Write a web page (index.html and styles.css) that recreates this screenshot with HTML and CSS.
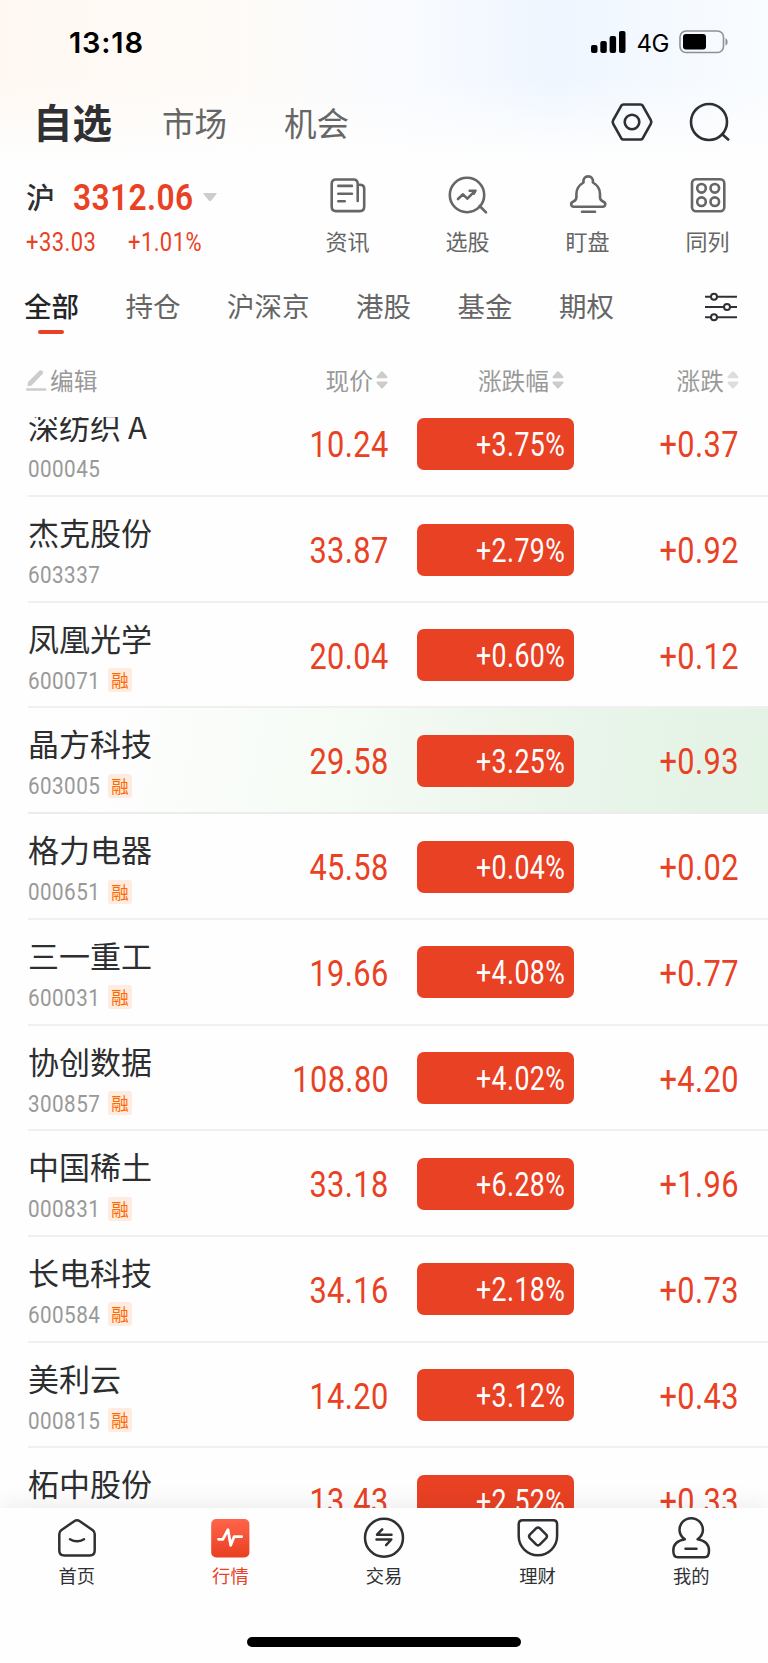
FILE: index.html
```html
<!DOCTYPE html>
<html lang="zh-CN">
<head>
    <meta charset="UTF-8">
    <meta name="viewport" content="width=device-width, initial-scale=1.0">
    <title>自选</title>
    <link rel="stylesheet" href="styles.css">
</head>
<body>
    <div class="app">
        <header class="top">
            <div class="status">
                <span class="time">13:18</span>
                <div class="status-right">
                    <svg class="signal" width="36" height="24" viewBox="0 0 36 24">
                        <rect x="0" y="15" width="6.5" height="8" rx="2"/>
                        <rect x="9.3" y="11" width="6.5" height="12" rx="2"/>
                        <rect x="18.6" y="6" width="6.5" height="17" rx="2"/>
                        <rect x="28" y="1" width="6.5" height="22" rx="2"/>
                    </svg>
                    <span class="network">4G</span>
                    <svg class="battery" width="50" height="24" viewBox="0 0 50 24">
                        <rect x="1" y="1" width="43.5" height="21.5" rx="6" fill="none" stroke="#8e9094" stroke-width="1.6"/>
                        <rect x="4" y="4" width="23" height="15.5" rx="3"/>
                        <path d="M46.5 8.2c2.8 1 2.8 6.4 0 7.4z" fill="#8e9094"/>
                    </svg>
                </div>
            </div>
            <nav class="nav">
                <a class="nav-item active">自选</a>
                <a class="nav-item">市场</a>
                <a class="nav-item">机会</a>
                <div class="nav-icons">
                    <svg class="line-icon" width="44" height="44" viewBox="0 0 44 44">
                        <path d="M13.5 4.5h17q1.5 0 2.3 1.3l8 14.4q1 1.8 0 3.6l-8 14.4q-.8 1.3-2.3 1.3h-17q-1.5 0-2.3-1.3l-8-14.4q-1-1.800 0-3.600l8-14.400q.8-1.300 2.300-1.300z"/>
                        <circle cx="22" cy="22" r="7.3"/>
                    </svg>
                    <svg class="line-icon" width="44" height="44" viewBox="0 0 44 44">
                        <circle cx="22" cy="22" r="18"/>
                        <path d="M35.5 34.5l5.7 5"/>
                    </svg>
                </div>
            </nav>
        </header>

        <section class="summary">
            <div class="index">
                <div class="index-main">
                    <span class="index-name">沪</span>
                    <span class="index-value num">3312.06</span>
                    <svg class="caret" width="14" height="9" viewBox="0 0 14 9"><path d="M.5 0h13q.6.4 0 1.100L8 7.700q-1 .9-2 0L.5 1.100Q0 .4.5 0z"/></svg>
                </div>
                <div class="index-sub">
                    <span class="num">+33.03</span>
                    <span class="num">+1.01%</span>
                </div>
            </div>
            <div class="tools">
                <div class="tool">
                    <svg width="40" height="40" viewBox="0 0 40 40">
                        <path d="M29.7 26V8.800q0-4.300-4.200-4.300H7.900Q3.700 4.500 3.700 8.800v23q0 4.300 4.200 4.300h24.100q4.200 0 4.200-4.300V13.500q0-3.800-4.500-3.800"/>
                        <path d="M10.300 10.900h13.600M10.300 18.700h13.600M10.300 26.300h6.400"/>
                    </svg>
                    <span>资讯</span>
                </div>
                <div class="tool">
                    <svg width="40" height="40" viewBox="0 0 40 40">
                        <circle cx="19" cy="20" r="17.2"/>
                        <path d="M31.7 31l6.300 6.300M10 24l5-4.700 4.300 4.400 7.500-7.500M21.700 15.700h5.800l-1.700 3"/>
                    </svg>
                    <span>选股</span>
                </div>
                <div class="tool">
                    <svg width="40" height="40" viewBox="0 0 40 40">
                        <path d="M15.5 7.500C15 3.500 17 1.400 20.200 1.400s5.200 2.100 4.700 6.100C30 10.500 32 14 32 19v3.500c0 2.800 1.500 3.200 3.700 4.300 2.600 1.400 1.700 4.900-1 4.900H5.700c-2.700 0-3.600-3.500-1-4.900 2.200-1.100 3.700-1.500 3.700-4.300V19c0-5 2-8.500 7.100-11.500z"/>
                        <path d="M14 36.700h13"/>
                    </svg>
                    <span>盯盘</span>
                </div>
                <div class="tool">
                    <svg width="40" height="40" viewBox="0 0 40 40">
                        <rect x="4" y="4.2" width="32.3" height="32" rx="4"/>
                        <circle cx="13.5" cy="13.3" r="4.3"/>
                        <circle cx="26.8" cy="13.3" r="4.3"/>
                        <circle cx="13.5" cy="26.7" r="4.3"/>
                        <circle cx="26.8" cy="26.7" r="4.3"/>
                    </svg>
                    <span>同列</span>
                </div>
            </div>
        </section>

        <nav class="tabs">
            <a class="tab active">全部</a>
            <a class="tab">持仓</a>
            <a class="tab">沪深京</a>
            <a class="tab">港股</a>
            <a class="tab">基金</a>
            <a class="tab">期权</a>
            <svg class="filter" width="32" height="30" viewBox="0 0 32 30">
                <path d="M.5 4.700h5.500M12 4.700h19.500M.5 15h18.500M25 15h6.500M.5 25.200h5.500M12 25.200h19.500"/>
                <circle cx="9" cy="4.7" r="3"/>
                <circle cx="22" cy="15" r="3"/>
                <circle cx="9" cy="25.2" r="3"/>
            </svg>
        </nav>

        <div class="list-head">
            <div class="edit">
                <svg width="21" height="21" viewBox="0 0 21 21"><path d="M1.500 16.500l.5-4.500L13.500.6q1.500-1 3 .4 1.200 1.500 0 3L5.500 15.500zM1 18.300h18.500q1 0 1 1.200t-1 1.200H1q-1 0-1-1.200t1-1.200z"/></svg>
                <span>编辑</span>
            </div>
            <div class="sort">现价<svg width="12" height="18" viewBox="0 0 12 18"><path d="M5 .8q1-1 2 0l4.300 4.700q.7 1.500-.8 1.700h-9Q0 7 .7 5.500zM1.500 10.500h9q1.500.2.8 1.700L7 16.900q-1 1-2 0L.7 12.200q-.7-1.500.8-1.700z"/></svg></div>
            <div class="sort">涨跌幅<svg width="12" height="18" viewBox="0 0 12 18"><path d="M5 .8q1-1 2 0l4.300 4.700q.7 1.500-.8 1.700h-9Q0 7 .7 5.500zM1.500 10.500h9q1.500.2.8 1.700L7 16.900q-1 1-2 0L.7 12.200q-.7-1.500.8-1.700z"/></svg></div>
            <div class="sort light">涨跌<svg width="12" height="18" viewBox="0 0 12 18"><path d="M5 .8q1-1 2 0l4.300 4.700q.7 1.500-.8 1.700h-9Q0 7 .7 5.500zM1.500 10.500h9q1.500.2.8 1.700L7 16.900q-1 1-2 0L.7 12.200q-.7-1.500.8-1.700z"/></svg></div>
        </div>

        <main class="list">
            <div class="row">
                <div class="stock"><div class="name">深纺织 A</div><div class="meta"><span class="code num">000045</span></div></div>
                <div class="price"><span class="num">10.24</span></div>
                <div class="pill"><span class="num">+3.75%</span></div>
                <div class="change"><span class="num">+0.37</span></div>
            </div>
            <div class="row">
                <div class="stock"><div class="name">杰克股份</div><div class="meta"><span class="code num">603337</span></div></div>
                <div class="price"><span class="num">33.87</span></div>
                <div class="pill"><span class="num">+2.79%</span></div>
                <div class="change"><span class="num">+0.92</span></div>
            </div>
            <div class="row">
                <div class="stock"><div class="name">凤凰光学</div><div class="meta"><span class="code num">600071</span><span class="tag">融</span></div></div>
                <div class="price"><span class="num">20.04</span></div>
                <div class="pill"><span class="num">+0.60%</span></div>
                <div class="change"><span class="num">+0.12</span></div>
            </div>
            <div class="row flash">
                <div class="stock"><div class="name">晶方科技</div><div class="meta"><span class="code num">603005</span><span class="tag">融</span></div></div>
                <div class="price"><span class="num">29.58</span></div>
                <div class="pill"><span class="num">+3.25%</span></div>
                <div class="change"><span class="num">+0.93</span></div>
            </div>
            <div class="row">
                <div class="stock"><div class="name">格力电器</div><div class="meta"><span class="code num">000651</span><span class="tag">融</span></div></div>
                <div class="price"><span class="num">45.58</span></div>
                <div class="pill"><span class="num">+0.04%</span></div>
                <div class="change"><span class="num">+0.02</span></div>
            </div>
            <div class="row">
                <div class="stock"><div class="name">三一重工</div><div class="meta"><span class="code num">600031</span><span class="tag">融</span></div></div>
                <div class="price"><span class="num">19.66</span></div>
                <div class="pill"><span class="num">+4.08%</span></div>
                <div class="change"><span class="num">+0.77</span></div>
            </div>
            <div class="row">
                <div class="stock"><div class="name">协创数据</div><div class="meta"><span class="code num">300857</span><span class="tag">融</span></div></div>
                <div class="price"><span class="num">108.80</span></div>
                <div class="pill"><span class="num">+4.02%</span></div>
                <div class="change"><span class="num">+4.20</span></div>
            </div>
            <div class="row">
                <div class="stock"><div class="name">中国稀土</div><div class="meta"><span class="code num">000831</span><span class="tag">融</span></div></div>
                <div class="price"><span class="num">33.18</span></div>
                <div class="pill"><span class="num">+6.28%</span></div>
                <div class="change"><span class="num">+1.96</span></div>
            </div>
            <div class="row">
                <div class="stock"><div class="name">长电科技</div><div class="meta"><span class="code num">600584</span><span class="tag">融</span></div></div>
                <div class="price"><span class="num">34.16</span></div>
                <div class="pill"><span class="num">+2.18%</span></div>
                <div class="change"><span class="num">+0.73</span></div>
            </div>
            <div class="row">
                <div class="stock"><div class="name">美利云</div><div class="meta"><span class="code num">000815</span><span class="tag">融</span></div></div>
                <div class="price"><span class="num">14.20</span></div>
                <div class="pill"><span class="num">+3.12%</span></div>
                <div class="change"><span class="num">+0.43</span></div>
            </div>
            <div class="row">
                <div class="stock"><div class="name">柘中股份</div></div>
                <div class="price"><span class="num">13.43</span></div>
                <div class="pill"><span class="num">+2.52%</span></div>
                <div class="change"><span class="num">+0.33</span></div>
            </div>
        </main>

        <footer class="bottom">
            <nav class="tabbar">
                <a class="bar-item">
                    <svg class="line-icon" width="44" height="44" viewBox="0 0 44 44">
                        <path d="M19.200 5.200q2.800-1.900 5.600 0l13 9q1.900 1.500 1.900 3.800v16.500q0 5-5 5H9.300q-5 0-5-5V18q0-2.300 1.900-3.800z"/>
                        <path d="M15 23.200q7 4.200 14 0"/>
                    </svg>
                    <span>首页</span>
                </a>
                <a class="bar-item active">
                    <svg width="44" height="44" viewBox="0 0 44 44">
                        <defs>
                            <linearGradient id="hot" x1="0" y1="0" x2="0" y2="1">
                                <stop offset="0" stop-color="#ff6549"/>
                                <stop offset="1" stop-color="#e93f22"/>
                            </linearGradient>
                        </defs>
                        <rect x="3.2" y="3" width="38.2" height="38.5" rx="5" fill="url(#hot)"/>
                        <path d="M10.500 23.300h4.300L20 13.700l2.700 15.600 3.400-8.600h7.500" fill="none" stroke="#fff" stroke-width="2.8" stroke-linecap="round" stroke-linejoin="round"/>
                    </svg>
                    <span>行情</span>
                </a>
                <a class="bar-item">
                    <svg class="line-icon" width="44" height="44" viewBox="0 0 44 44">
                        <circle cx="22" cy="21.7" r="19"/>
                        <path d="M29.500 18.700H15l5.200-5.400M14.500 23.500h14.800l-5.200 5.600"/>
                    </svg>
                    <span>交易</span>
                </a>
                <a class="bar-item">
                    <svg class="line-icon" width="44" height="44" viewBox="0 0 44 44">
                        <path d="M6.700 4.200h30.400q4 0 4 4V20c0 10.500-8.500 19.300-19.200 19.300S2.700 30.500 2.700 20V8.200q0-4 4-4z"/>
                        <path d="M20.300 12.200q1.700-1.500 3.400 0l6.500 6.500q1.500 1.700 0 3.400l-6.500 6.500q-1.700 1.500-3.400 0l-6.500-6.500q-1.500-1.700 0-3.400z"/>
                    </svg>
                    <span>理财</span>
                </a>
                <a class="bar-item">
                    <svg class="line-icon" width="44" height="44" viewBox="0 0 44 44">
                        <path d="M15.800 23.300C12 20.500 10.500 17.500 10.500 14c0-6.500 5-11.800 11.700-11.800S33.900 7.500 33.900 14c0 3.500-1.500 6.500-5.300 9.300 6.500 1.200 11.400 4.700 11.400 11.200 0 4.500-1.500 6.800-4.500 6.800H8.800c-3 0-4.500-2.300-4.500-6.800 0-6.500 5-10 11.500-11.200z"/>
                        <path d="M16.500 32.700h11"/>
                    </svg>
                    <span>我的</span>
                </a>
            </nav>
            <div class="home-indicator"></div>
        </footer>
    </div>
</body>
</html>
```
FILE: styles.css
```css
* {
    margin: 0;
    padding: 0;
    box-sizing: border-box;
}

body {
    background: #fefefe;
    font-family: "Noto Sans CJK SC", sans-serif;
    color: #2d2e30;
}

.app {
    display: flex;
    flex-direction: column;
    width: 768px;
    height: 1663px;
    overflow: hidden;
}

/* narrow figures used for every quote */
.num {
    display: inline-block;
    font-family: Roboto, sans-serif;
    font-weight: 450;
    letter-spacing: 0.5px;
    transform: scaleX(0.82);
    transform-origin: right center;
    white-space: nowrap;
}

.line-icon {
    fill: none;
    stroke: #2f3033;
    stroke-width: 2.5;
    stroke-linecap: round;
    stroke-linejoin: round;
}

/* header */
.top {
    height: 160px;
    background:
        linear-gradient(to bottom, rgba(254, 254, 254, 0) 50%, #fefefe 100%),
        linear-gradient(to right, #fff8f2 0%, #fefbf8 32%, #f9fbff 52%, #eff6ff 72%, #f9fcff 100%);
}

.status {
    display: flex;
    justify-content: space-between;
    align-items: center;
    height: 84px;
    padding: 0 39px 0 69px;
    color: #000;
}

.time {
    font-family: Inter, sans-serif;
    font-size: 29px;
    font-weight: 600;
    letter-spacing: 0.8px;
}

.status-right {
    display: flex;
    align-items: center;
}

.network {
    margin: 3px 10px 0 9px;
    font-family: Inter, sans-serif;
    font-size: 24px;
    letter-spacing: -0.4px;
}

.nav {
    display: flex;
    align-items: center;
    height: 76px;
    padding: 0 37px 0 33px;
}

.nav-item {
    height: 76px;
    margin-right: 57px;
    font-size: 32.5px;
    line-height: 76px;
    color: #666;
}

.nav-item.active {
    margin-right: 50px;
    font-size: 39.5px;
    font-weight: 700;
    line-height: 74px;
    color: #2f3033;
}

.nav-icons {
    display: flex;
    gap: 33.5px;
    margin-left: auto;
}

.nav-icons .line-icon {
    stroke-width: 2.6;
}

/* index quote and shortcuts */
.summary {
    display: flex;
    justify-content: space-between;
    height: 110px;
    padding: 15px 38.5px 0 26px;
}

.index-main,
.index-sub {
    display: flex;
    align-items: center;
    color: #e94124;
}

.index-main {
    height: 44px;
}

.index .num {
    transform: scaleX(0.845);
    transform-origin: left center;
}

.index-name {
    width: 47px;
    margin-top: -3px;
    font-size: 29px;
    font-weight: 500;
    color: #2f3033;
}

.index-value {
    width: 130px;
    font-size: 37.5px;
    font-weight: 600;
}

.caret {
    fill: #ccc;
}

.index-sub {
    height: 46px;
    font-size: 26px;
}

.index-sub .num {
    width: 102px;
}

.tools {
    display: flex;
    gap: 76px;
}

.tool {
    display: flex;
    flex-direction: column;
    align-items: center;
    width: 44px;
    font-size: 22px;
    line-height: 32px;
    color: #666;
}

.tool svg {
    margin-bottom: 9px;
    fill: none;
    stroke: #666;
    stroke-width: 2.6;
    stroke-linecap: round;
    stroke-linejoin: round;
}

/* group tabs */
.tabs {
    display: flex;
    align-items: center;
    height: 74px;
    padding: 0 31px 0 24px;
    font-size: 27.5px;
    color: #666;
}

.tab {
    position: relative;
    height: 74px;
    margin-right: 46.5px;
    line-height: 70px;
}

.tab.active {
    font-weight: 500;
    color: #242527;
}

.tab.active::after {
    content: "";
    position: absolute;
    left: 14px;
    bottom: 10px;
    width: 26px;
    height: 4px;
    border-radius: 2px;
    background: #e94124;
}

.filter {
    margin-left: auto;
    fill: none;
    stroke: #2f3033;
    stroke-width: 2;
    stroke-linecap: round;
}

/* list */
.list-head,
.row {
    display: grid;
    grid-template-columns: 1fr 140px 157px 164px;
}

.list-head {
    align-items: center;
    height: 73px;
    padding: 0 29px 0 26px;
    font-size: 23.7px;
    line-height: 34px;
    color: #999;
}

.edit,
.sort {
    display: flex;
    align-items: center;
}

.edit {
    gap: 3px;
}

.edit span {
    margin-top: -2px;
}

.edit svg,
.sort svg {
    fill: #ccc;
}

.sort {
    justify-content: flex-end;
    gap: 3px;
    margin-top: -1px;
}

.sort:nth-child(2) {
    margin-right: 30px;
    margin-left: -30px;
}

.sort:nth-child(3) {
    margin-right: 11px;
}

.sort.light svg {
    fill: #ddd;
}

.list {
    flex: none;
    height: 1091px;
    overflow: hidden;
}

.row {
    height: 105.7px;
    margin-left: 28px;
    padding-right: 29px;
    border-bottom: 2px solid #f0f0f0;
}

.row:first-child {
    margin-top: -25.6px;
}

.row.flash {
    margin-left: 0;
    padding-left: 28px;
    border-bottom: 0;
    background:
        linear-gradient(#ececec, #ececec) 28px 100% / 100% 2px no-repeat,
        linear-gradient(100deg, #fefefe 12%, #f5fbf5 45%, #eaf5eb 72%, #e3f3e4 100%);
}

.name {
    height: 46px;
    margin-top: 12px;
    font-size: 31px;
    line-height: 46px;
    white-space: nowrap;
}

.meta {
    display: flex;
    align-items: center;
    height: 39px;
    color: #999;
}

.code {
    width: 80px;
    font-size: 24.3px;
    transform: scaleX(0.85);
    transform-origin: left center;
}

.tag {
    width: 24px;
    height: 24px;
    border-radius: 3px;
    background: rgba(255, 110, 20, 0.12);
    font-size: 17.5px;
    line-height: 23px;
    text-align: center;
    color: #ff6a00;
}

.price,
.change {
    height: 103px;
    font-size: 37.5px;
    line-height: 99px;
    text-align: right;
    color: #e94124;
}

.price {
    margin: 0 29px 0 -29px;
}

.pill {
    height: 52px;
    margin: 26.5px 1px 0 -1px;
    padding-right: 9px;
    border-radius: 7px;
    background: #e94124;
    font-size: 33px;
    line-height: 49px;
    text-align: right;
    color: #fff;
}

.pill .num {
    transform: scaleX(0.81);
}

/* bottom bar */
.bottom {
    position: relative;
    flex: 1;
    background: #fefefe;
    box-shadow: 0 -2px 24px rgba(0, 0, 0, 0.08);
}

.tabbar {
    display: flex;
    padding-top: 8px;
}

.bar-item {
    display: flex;
    flex: 1;
    flex-direction: column;
    align-items: center;
    font-size: 18.3px;
    line-height: 26px;
    color: #2f3033;
}

.bar-item svg {
    margin-bottom: 2px;
}

.bar-item.active {
    color: #e94124;
}

.home-indicator {
    width: 274px;
    height: 10px;
    margin: 49px auto 0;
    border-radius: 5px;
    background: #000;
}
```
